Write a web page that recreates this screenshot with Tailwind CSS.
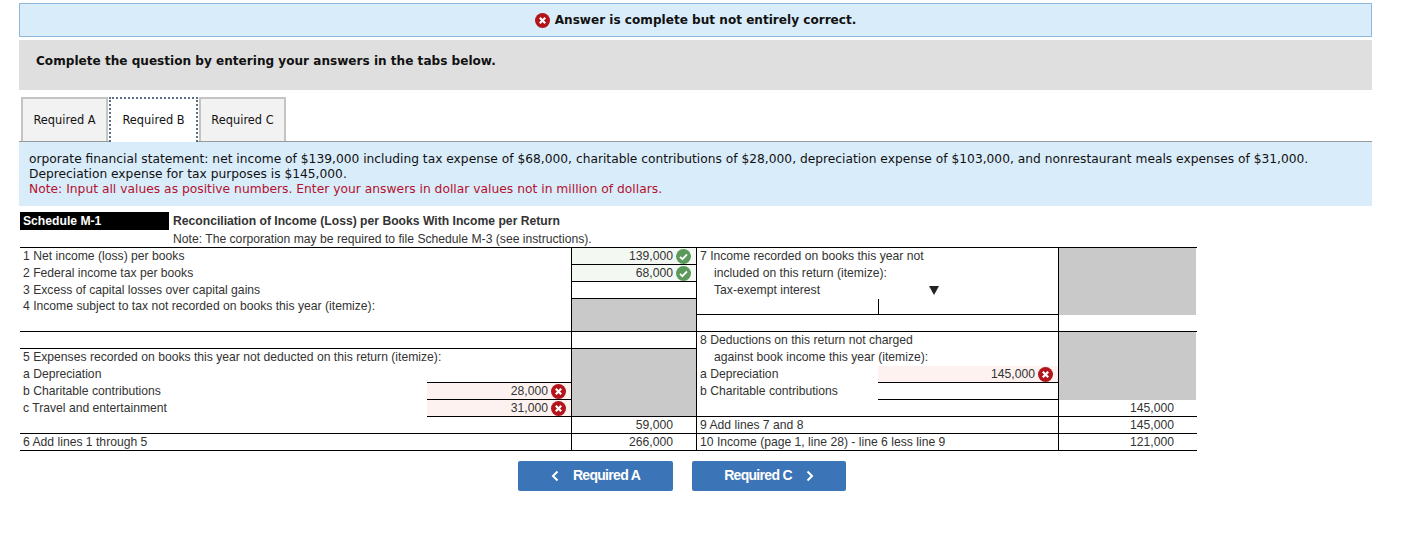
<!DOCTYPE html>
<html lang="en">
<head>
  <meta charset="UTF-8">
  <title>Schedule M-1</title>
  <script src="https://cdn.jsdelivr.net/npm/@tailwindcss/browser@4"></script>
</head>
<body class="bg-white font-['DejaVu_Sans',sans-serif] text-[12.08px] text-[#111]">
  <div class="w-[1353px] ml-[19px] pt-[3px]">
    <!-- result banner -->
    <div class="h-[34px] flex items-center justify-center gap-[5px] bg-[#d9ecfa] border border-[#8fb8de] font-bold">
      <svg class="w-[15px] h-[15px]" viewBox="0 0 15 15"><circle cx="7.5" cy="7.5" r="7.5" fill="#b3141b"/><path d="M4.8 4.8l5.4 5.4M10.2 4.8l-5.4 5.4" stroke="#fff" stroke-width="2.2"/></svg>
      <span>Answer is complete but not entirely correct.</span>
    </div>
    <div class="h-[50px] mt-[3px] bg-[#dfdfdf] flex items-center pl-[17px] pb-[8px] font-bold">Complete the question by entering your answers in the tabs below.</div>

    <!-- tabs -->
    <div class="flex h-[45px] mt-[7px] pl-[2px] border-b border-[#999] text-[11.4px]">
      <div class="w-[87px] h-[44px] mr-px pt-[2px] flex items-center justify-center bg-[#f2f2f2] border-2 border-b-0 border-[#c4c4c4]">Required A</div>
      <div class="w-[89px] h-[45px] pt-px flex items-center justify-center bg-white border-2 border-b-0 border-dotted border-[#5a6f86]">Required B</div>
      <div class="w-[87px] h-[44px] ml-px pt-[2px] flex items-center justify-center bg-[#f2f2f2] border-2 border-b-0 border-[#c4c4c4]">Required C</div>
    </div>
    <div class="h-[64px] bg-[#d9ecfa] pl-[10px] pt-[10px] leading-[15px] text-[12.25px]">
      <p>orporate financial statement: net income of $139,000 including tax expense of $68,000, charitable contributions of $28,000, depreciation expense of $103,000, and nonrestaurant meals expenses of $31,000.</p>
      <p>Depreciation expense for tax purposes is $145,000.</p>
      <p class="text-[#b3122e] text-[12.3px]">Note: Input all values as positive numbers. Enter your answers in dollar values not in million of dollars.</p>
    </div>
  </div>

  <!-- schedule -->
  <div class="w-[1177px] ml-[20px] mt-[6px] font-['Liberation_Sans',sans-serif] text-[12.17px] text-[#333]">
    <div class="flex h-[18px] items-center">
      <div class="w-[149px] h-[18px] leading-[18px] bg-black text-white font-bold pl-[3px]">Schedule M-1</div>
      <div class="pl-[4px] font-bold">Reconciliation of Income (Loss) per Books With Income per Return</div>
    </div>
    <div class="h-[17px] leading-[18px] pl-[153px]">Note: The corporation may be required to file Schedule M-3 (see instructions).</div>

    <div class="grid grid-cols-[407px_144px_125px_182px_180px_139px] grid-rows-[17px_17px_17px_16px_17px_17px_17px_17px_17px_17px_17px_17px] border-t border-black leading-[16px] *:box-border">
      <!-- left labels -->
      <div class="col-start-1 col-span-2 row-start-1 pl-[3px]">1 Net income (loss) per books</div>
      <div class="col-start-1 col-span-2 row-start-2 pl-[3px]">2 Federal income tax per books</div>
      <div class="col-start-1 col-span-2 row-start-3 pl-[3px]">3 Excess of capital losses over capital gains</div>
      <div class="col-start-1 col-span-2 row-start-4 pl-[3px] leading-[14px]">4 Income subject to tax not recorded on books this year (itemize):</div>
      <div class="col-start-1 col-span-2 row-start-5 border-b border-black"></div>
      <div class="col-start-1 col-span-2 row-start-6 border-b border-black"></div>
      <div class="col-start-1 col-span-2 row-start-7 pl-[3px]">5 Expenses recorded on books this year not deducted on this return (itemize):</div>
      <div class="col-start-1 row-start-8 pl-[3px]">a Depreciation</div>
      <div class="col-start-1 row-start-9 pl-[3px]">b Charitable contributions</div>
      <div class="col-start-1 row-start-10 pl-[3px]">c Travel and entertainment</div>
      <div class="col-start-1 col-span-2 row-start-11 border-b border-black"></div>
      <div class="col-start-1 col-span-2 row-start-12 pl-[3px] border-b border-black">6 Add lines 1 through 5</div>

      <!-- left inputs -->
      <div class="col-start-2 row-start-8 border-b border-black"></div>
      <div class="col-start-2 row-start-9 border-b border-black bg-[#fdf2f0] flex items-center justify-end gap-[3px] pr-[5px]">28,000
        <svg class="w-[15px] h-[15px]" viewBox="0 0 15 15"><circle cx="7.5" cy="7.5" r="7.5" fill="#b3141b"/><path d="M4.8 4.8l5.4 5.4M10.2 4.8l-5.4 5.4" stroke="#fff" stroke-width="2.2"/></svg>
      </div>
      <div class="col-start-2 row-start-10 border-b border-black bg-[#fdf2f0] flex items-center justify-end gap-[3px] pr-[5px]">31,000
        <svg class="w-[15px] h-[15px]" viewBox="0 0 15 15"><circle cx="7.5" cy="7.5" r="7.5" fill="#b3141b"/><path d="M4.8 4.8l5.4 5.4M10.2 4.8l-5.4 5.4" stroke="#fff" stroke-width="2.2"/></svg>
      </div>

      <!-- middle amounts -->
      <div class="col-start-3 row-start-1 border-l border-b border-black bg-[#f4f8f3] flex items-center justify-end gap-[3px] pr-[5px]">139,000
        <svg class="w-[15px] h-[15px]" viewBox="0 0 15 15"><circle cx="7.5" cy="7.5" r="7.5" fill="#5b9a5b"/><path d="M4 7.8l2.4 2.4L11 5.4" fill="none" stroke="#fff" stroke-width="1.8"/></svg>
      </div>
      <div class="col-start-3 row-start-2 border-l border-b border-black bg-[#f4f8f3] flex items-center justify-end gap-[3px] pr-[5px]">68,000
        <svg class="w-[15px] h-[15px]" viewBox="0 0 15 15"><circle cx="7.5" cy="7.5" r="7.5" fill="#5b9a5b"/><path d="M4 7.8l2.4 2.4L11 5.4" fill="none" stroke="#fff" stroke-width="1.8"/></svg>
      </div>
      <div class="col-start-3 row-start-3 border-l border-b border-black"></div>
      <div class="col-start-3 row-start-4 row-span-2 border-l border-black bg-[#c9c9c9] border-b"></div>
      <div class="col-start-3 row-start-6 border-l border-b border-black"></div>
      <div class="col-start-3 row-start-7 row-span-4 border-l border-b border-black bg-[#c9c9c9]"></div>
      <div class="col-start-3 row-start-11 border-l border-b border-black text-right pr-[23px]">59,000</div>
      <div class="col-start-3 row-start-12 border-l border-b border-black text-right pr-[23px]">266,000</div>

      <!-- right labels -->
      <div class="col-start-4 col-span-2 row-start-1 border-l border-black pl-[3px]">7 Income recorded on books this year not</div>
      <div class="col-start-4 col-span-2 row-start-2 border-l border-black pl-[17px]">included on this return (itemize):</div>
      <div class="col-start-4 row-start-3 border-l border-black pl-[17px]">Tax-exempt interest</div>
      <div class="col-start-4 row-start-4 border-l border-b border-black"></div>
      <div class="col-start-4 col-span-2 row-start-5 border-l border-b border-black"></div>
      <div class="col-start-4 col-span-2 row-start-6 border-l border-black pl-[3px]">8 Deductions on this return not charged</div>
      <div class="col-start-4 col-span-2 row-start-7 border-l border-black pl-[17px]">against book income this year (itemize):</div>
      <div class="col-start-4 row-start-8 border-l border-black pl-[3px]">a Depreciation</div>
      <div class="col-start-4 row-start-9 border-l border-black pl-[3px]">b Charitable contributions</div>
      <div class="col-start-4 col-span-2 row-start-10 border-l border-b border-black"></div>
      <div class="col-start-4 col-span-2 row-start-11 border-l border-b border-black pl-[3px]">9 Add lines 7 and 8</div>
      <div class="col-start-4 col-span-2 row-start-12 border-l border-b border-black pl-[3px]">10 Income (page 1, line 28) - line 6 less line 9</div>

      <!-- right inputs -->
      <div class="col-start-5 row-start-3 flex items-center pl-[51px]">
        <svg class="w-[10px] h-[9px]" viewBox="0 0 10 9"><path d="M0 0h10L5 9z" fill="#222"/></svg>
      </div>
      <div class="col-start-5 row-start-4 border-l border-b border-black"></div>
      <div class="col-start-5 row-start-8 border-b border-black bg-[#fdf2f0] flex items-center justify-end gap-[3px] pr-[5px]">145,000
        <svg class="w-[15px] h-[15px]" viewBox="0 0 15 15"><circle cx="7.5" cy="7.5" r="7.5" fill="#b3141b"/><path d="M4.8 4.8l5.4 5.4M10.2 4.8l-5.4 5.4" stroke="#fff" stroke-width="2.2"/></svg>
      </div>
      <div class="col-start-5 row-start-9 border-b border-black"></div>

      <!-- last column -->
      <div class="col-start-6 row-start-1 row-span-4 border-l border-black bg-[#c9c9c9] mr-px"></div>
      <div class="col-start-6 row-start-5 border-l border-b border-black"></div>
      <div class="col-start-6 row-start-6 row-span-4 border-l border-black bg-[#c9c9c9] mr-px"></div>
      <div class="col-start-6 row-start-10 border-l border-b border-black text-right pr-[23px]">145,000</div>
      <div class="col-start-6 row-start-11 border-l border-b border-black text-right pr-[23px]">145,000</div>
      <div class="col-start-6 row-start-12 border-l border-b border-black text-right pr-[23px]">121,000</div>
    </div>

    <!-- prev / next -->
    <div class="flex gap-[19px] ml-[498px] mt-[10px] text-white font-bold text-[14px] tracking-[-0.7px]">
      <button class="w-[155px] h-[30px] bg-[#3b75b8] rounded-[2px] flex items-center justify-center gap-[14px]">
        <svg class="w-[8px] h-[12px]" viewBox="0 0 8 12"><path d="M6.5 1.5L2 6l4.5 4.5" fill="none" stroke="#fff" stroke-width="2"/></svg>
        <span class="-mt-px">Required A</span>
      </button>
      <button class="w-[154px] h-[30px] bg-[#3b75b8] rounded-[2px] flex items-center justify-center gap-[14px]">
        <span class="-mt-px">Required C</span>
        <svg class="w-[8px] h-[12px]" viewBox="0 0 8 12"><path d="M1.5 1.5L6 6l-4.5 4.5" fill="none" stroke="#fff" stroke-width="2"/></svg>
      </button>
    </div>
  </div>
</body>
</html>
